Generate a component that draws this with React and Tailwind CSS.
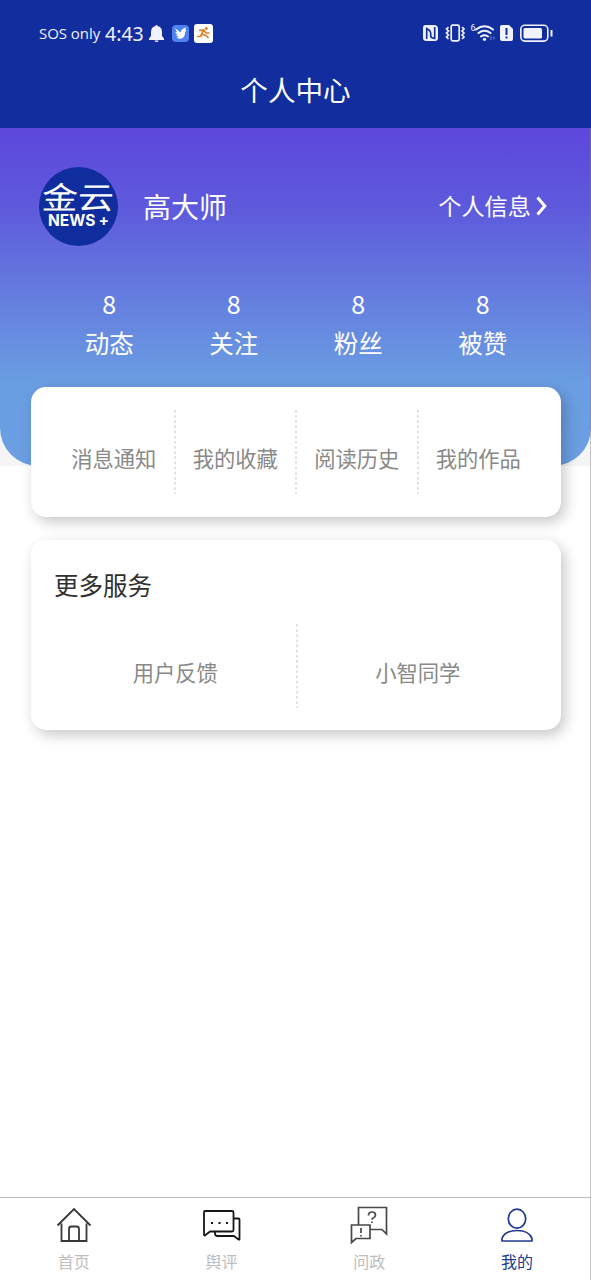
const stats = ['动态', '关注', '粉丝', '被赞'];
const links = ['消息通知', '我的收藏', '阅读历史', '我的作品'];
const services = ['用户反馈', '小智同学'];

function StatusBar() {
  return (
    <div className="flex h-[66px] items-center pl-[39px] pr-[38px]">
      <span className="w-[66px] whitespace-nowrap pt-px font-['Open_Sans'] text-[15px] leading-none tracking-[-0.050px]">SOS only</span>
      <span className="w-[44px] whitespace-nowrap pt-px font-['Noto_Sans'] text-[19.500px] leading-none">4:43</span>
      <svg width="15" height="18" viewBox="0 0 15 18" className="mt-px" fill="#f0f3ff">
        <path d="M7.500 0a1 1 0 0 1 1 1C11.500 1.500 13 4 13 7v4l2 2.500V15H0v-1.500L2 11V7c0-3 1.500-5.500 4.500-6a1 1 0 0 1 1-1zM5.500 15.500h4a2 1.500 0 0 1-4 0z" />
      </svg>
      <svg width="17" height="17" viewBox="0 0 17 17" className="ml-[8px]">
        <rect width="17" height="17" rx="4" fill="#4f82ee" />
        <path d="M3 3l5.500 4.500C9 5 11 3 14 2.500L13.500 5l1 .8-1.500 1C13.500 11 11 14.500 7 13.500l-2.500-.5 2-1.500-3-1.500 2-.5L3 7l2 .2z" fill="white" />
      </svg>
      <svg width="19" height="19" viewBox="0 0 19 19" className="ml-[5px]">
        <rect width="19" height="19" rx="3" fill="white" />
        <circle cx="12.300" cy="4.500" r="1.500" fill="#dd812f" />
        <path d="M5 6.500l4.500-.7 2.500 3 3.500.2M9.500 6.500L7.500 10l4.500 1.500 2.500 2.500M8 10l-1.500 2.500H3" fill="none" stroke="#dd812f" strokeWidth="1.700" />
      </svg>
      <div className="flex-1" />
      <svg width="130" height="22" viewBox="0 0 130 22" fill="none" stroke="#f0f3ff">
        <path d="M2.500 3H11q4 0 4 4v9q0 3-3 3H3.500Q0 19 0 16V6Q0 3 2.500 3z" fill="#f0f3ff" stroke="none" />
        <path d="M3.700 17V6.500q4 2 4 5V14q0 2 4 2.500V5" stroke="#112d9e" strokeWidth="1.600" />
        <rect x="28.200" y="3.200" width="8" height="15.600" rx="1.500" strokeWidth="1.700" />
        <path d="M25.500 5l-2 2 2 2-2 2 2 2-2 2 2 2M39 5l2 2-2 2 2 2-2 2 2 2-2 2" strokeWidth="1.700" />
        <path d="M53 7.500Q61.500 1 70 7.500M55.500 11Q61.500 6.500 67.500 11M58 14.500Q61.500 12 65 14.500" strokeWidth="2.100" strokeLinecap="round" />
        <circle cx="61.500" cy="17.300" r="1.600" fill="#f0f3ff" stroke="none" />
        <text x="47.500" y="9" fill="#f0f3ff" stroke="none" fontSize="9" fontFamily="Roboto">6</text>
        <path d="M68 14v4M71 14.500v3" strokeWidth=".8" opacity=".6" />
        <path d="M79 3h7l4 4v10q0 2-2 2h-9q-2 0-2-2V5q0-2 2-2z" fill="#f0f3ff" stroke="none" />
        <path d="M83.500 6v7M83.500 14.500v2" stroke="#112d9e" strokeWidth="2" />
        <rect x="97.800" y="3.300" width="27" height="15.800" rx="4" strokeWidth="1.600" />
        <rect x="100.500" y="6" width="18.500" height="10.500" rx="1.500" fill="#f0f3ff" stroke="none" />
        <path d="M128.500 8v6.500" strokeWidth="2" />
      </svg>
    </div>
  );
}

function Divider() {
  return (
    <svg width="2" height="84" className="absolute right-[-1px] top-0">
      <path d="M1 0V84" stroke="#e2e2e2" strokeWidth="2" strokeDasharray="2.700 2.450" />
    </svg>
  );
}

function Cells({ items }) {
  return (
    <div className="flex">
      {items.map((name, i) => (
        <div key={name} className="relative flex h-[84px] flex-1 items-center justify-center pt-[12px] text-[21.300px] leading-none text-[#898989]">
          {name}
          {i < items.length - 1 && <Divider />}
        </div>
      ))}
    </div>
  );
}

const HomeIcon = () => (
  <svg width="40" height="40" viewBox="0 0 40 40" fill="none" stroke="#383838" strokeWidth="1.800">
    <path d="M3.500 20.500L20 4l16.500 16.500M7.500 18.500V36h25V18.500M15 36V24q0-2.500 2.500-2.500h5q2.500 0 2.500 2.500v12" />
  </svg>
);
const ChatIcon = () => (
  <svg width="40" height="40" viewBox="0 0 40 40" fill="none" stroke="#161616" strokeWidth="1.800" strokeLinejoin="round">
    <path d="M2 7q0-1 1-1h27q1.500 0 1.500 1.500V25q0 1.500-1.500 1.500H8L2.800 30.500q-.8 0-.8-1zM31.500 13.500h5q1 0 1 1V34q0 1-1 .5L32 31H15.500q-2.500 0-2.500-2.500v-2" />
    <path d="M9 18h2M16.500 18h2M24 18h2" strokeWidth="2.200" />
  </svg>
);
const AskIcon = () => (
  <svg width="40" height="40" viewBox="0 0 40 40" fill="none" stroke="#484848" strokeWidth="1.700">
    <path d="M9.500 20V2.500h28V29L33 24.500H21M2.500 20H21v13.500H7L2.500 37.500zM12 23v5M12 30v1.500" />
    <path d="M19.500 10.500q0-3.500 3.500-3.500t3.500 3q0 2-2 2.700-1.500.5-1.500 2M23 16.500v1.500" />
  </svg>
);
const UserIcon = () => (
  <svg width="40" height="40" viewBox="0 0 40 40" fill="none" stroke="#203b8f" strokeWidth="1.700">
    <ellipse cx="20" cy="13.700" rx="8.700" ry="9.500" />
    <path d="M5 36v-2.500C7 28 13 25.500 20 25.500S33 28 35 33.500V36z" strokeLinejoin="round" />
  </svg>
);
const tabs = [
  { name: '首页', Icon: HomeIcon },
  { name: '舆评', Icon: ChatIcon },
  { name: '问政', Icon: AskIcon },
  { name: '我的', Icon: UserIcon, active: true },
];

export default function App() {
  return (
    <div className="relative flex h-[1280px] w-[591px] flex-col overflow-hidden bg-white font-['Noto_Sans_CJK_SC',sans-serif]">
      <header className="h-[128px] shrink-0 bg-[#112d9e] text-[#f0f3ff]">
        <StatusBar />
        <h1 className="pt-[9px] text-center text-[27.600px] leading-[28px] text-white">个人中心</h1>
      </header>
      <div className="h-[338px] shrink-0 bg-[#f5f5f5]">
        <section className="h-full rounded-b-[38px] bg-[linear-gradient(180deg,#5d47dc_0%,#5e59dc_23%,#6580df_52%,#6a9de2_75%,#6b9fe2_100%)] text-white">
          <div className="flex items-center pl-[39px] pr-[42px] pt-[39px]">
            <div className="flex size-[79px] flex-col items-center rounded-full bg-[#102d9e]">
              <div className="mt-[12px] h-[32px] origin-center -skew-x-3 scale-y-[0.860] whitespace-nowrap text-[36px] leading-[32px]">金云</div>
              <div className="mt-[2px] whitespace-nowrap font-[Inter] text-[15.500px] font-bold leading-[16px]">NEWS<span className="ml-[3px]">+</span></div>
            </div>
            <div className="-mt-px ml-[25px] text-[28px] leading-none">高大师</div>
            <div className="ml-auto flex items-center text-[23.200px] leading-none">
              <span className="-mt-px">个人信息</span>
              <svg width="14" height="22" viewBox="0 0 14 22" className="ml-[4px]" fill="none" stroke="white" strokeWidth="3"><path d="M2.500 2.500L9.800 11l-7.300 8.500" /></svg>
            </div>
          </div>
          <div className="mt-[42px] flex pl-[47px] pr-[46px]">
            {stats.map((name) => (
              <div key={name} className="flex flex-1 flex-col items-center">
                <span className="text-[25px] leading-[30px]">8</span>
                <span className="mt-[11px] text-[24.500px] leading-[28px]">{name}</span>
              </div>
            ))}
          </div>
        </section>
      </div>
      <main className="relative -mt-[79px] flex-1 pl-[31px] pr-[30px]">
        <section className="h-[130px] rounded-[15px] bg-white px-[22px] pt-[23px] shadow-[4px_5px_14px_rgba(0,0,0,0.22)]">
          <Cells items={links} />
        </section>
        <section className="mt-[23px] h-[190px] rounded-[15px] bg-white pl-[23px] pr-[22px] pt-[31px] shadow-[4px_5px_14px_rgba(0,0,0,0.22)]">
          <h2 className="mb-[25px] text-[24.500px] leading-[28px] text-[#303030]">更多服务</h2>
          <Cells items={services} />
        </section>
      </main>
      <nav className="flex h-[83px] shrink-0 border-t border-[#bdbdbd]">
        {tabs.map(({ name, Icon, active }) => (
          <div key={name} className={active ? 'flex flex-1 flex-col items-center pt-[7px] text-[#203b8f]' : 'flex flex-1 flex-col items-center pt-[7px] text-[#bdbdbd]'}>
            <Icon />
            <span className="mt-[7px] text-[16px] leading-[18px]">{name}</span>
          </div>
        ))}
      </nav>
      <div className="absolute bottom-0 right-0 top-[128px] w-px bg-[#808080]/45" />
    </div>
  );
}
